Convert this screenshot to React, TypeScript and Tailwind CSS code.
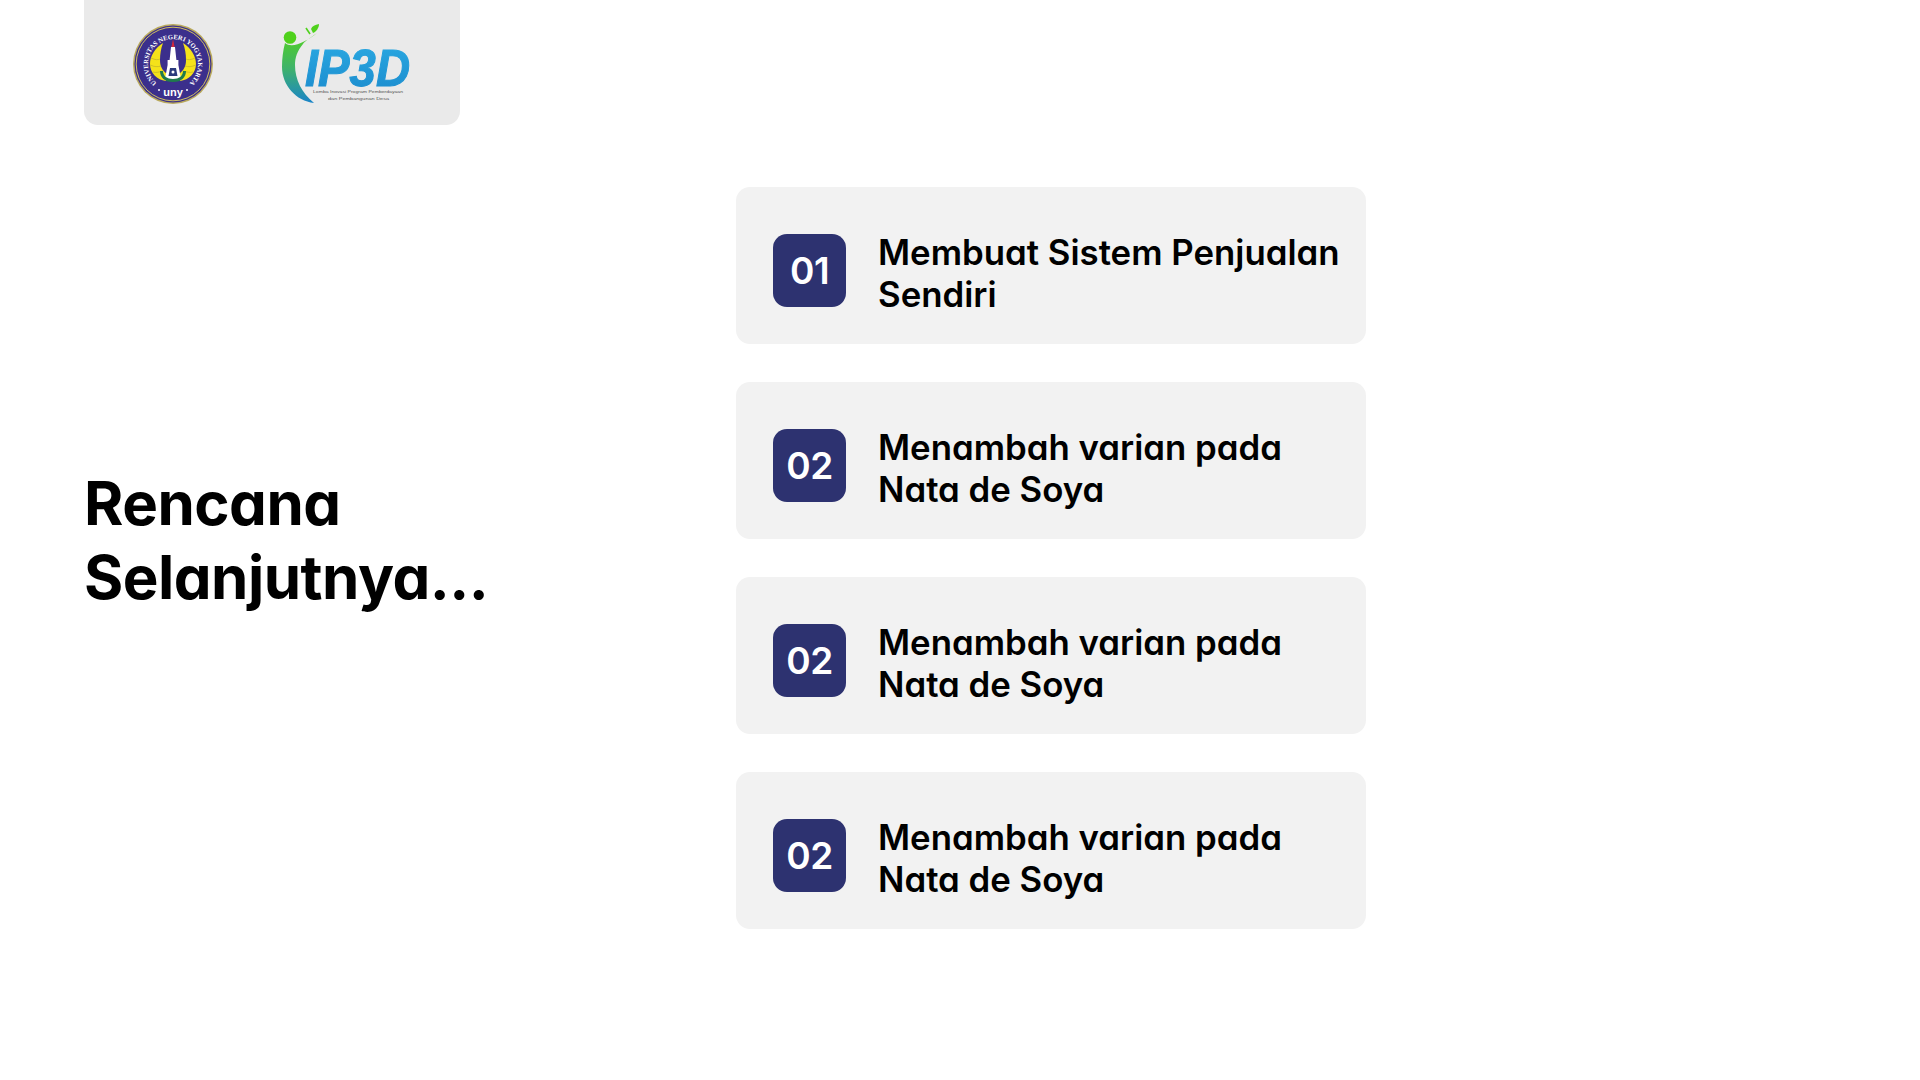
const items = [
  { no: '01', text: 'Membuat Sistem Penjualan Sendiri' },
  { no: '02', text: 'Menambah varian pada Nata de Soya' },
  { no: '02', text: 'Menambah varian pada Nata de Soya' },
  { no: '02', text: 'Menambah varian pada Nata de Soya' },
]

function UnyLogo() {
  return (
    <svg width="80" height="80" viewBox="0 0 80 80" className="shrink-0">
      <defs>
        <path id="uny-ring" d="M 25.6 60.5 A 25 25 0 1 1 54.4 60.5" />
      </defs>
      <circle cx="40" cy="40" r="40" fill="#b9a95c" />
      <circle cx="40" cy="40" r="38.5" fill="#3b2f8c" />
      <circle cx="40" cy="40" r="36.8" fill="none" stroke="#e0cf5e" strokeWidth="0.9" />
      <text fill="#ffffff" fontFamily="'Liberation Serif', serif" fontSize="6.6" fontWeight="700" textAnchor="middle">
        <textPath href="#uny-ring" startOffset="50%">UNIVERSITAS NEGERI YOGYAKARTA</textPath>
      </text>
      {/* wings */}
      <path d="M30 19 C22 24 17 32 17 40 C17 49 24 56 33 57 L34 50 C29 46 27 42 27 36 C27 30 28 24 30 19 Z" fill="#f5e21a" />
      <path d="M50 19 C58 24 63 32 63 40 C63 49 56 56 47 57 L46 50 C51 46 53 42 53 36 C53 30 52 24 50 19 Z" fill="#f5e21a" />
      <path d="M18 34 C22 36 25 36 27 35 M17.5 41 C21 43 25 43 28 42 M20 48 C23 49 26 48 30 47" stroke="#b8a82a" strokeWidth="0.6" fill="none" />
      <path d="M62 34 C58 36 55 36 53 35 M62.5 41 C59 43 55 43 52 42 M60 48 C57 49 54 48 50 47" stroke="#b8a82a" strokeWidth="0.6" fill="none" />
      {/* tugu */}
      <path d="M40 15 L41.6 23 H38.4 Z" fill="#d2283c" />
      <path d="M38 23 H42 L43.4 36 H45.4 V41 L48 55 H32 L34.6 41 V36 H36.6 Z" fill="#ffffff" />
      <path d="M27 47 C27 53 31 58 40 58 C49 58 53 53 53 47 L50 47 C50 52 46 55 40 55 C34 55 30 52 30 47 Z" fill="#1f7a4d" />
      <path d="M37 44 H43 L44.5 52 H35.5 Z" fill="#2b3a7c" />
      <circle cx="40" cy="48" r="1.5" fill="#ffffff" />
      <text x="40" y="72" textAnchor="middle" fill="#ffffff" fontFamily="'Liberation Sans', sans-serif" fontSize="11" fontWeight="700">uny</text>
      <circle cx="26" cy="66" r="1" fill="#ffffff" />
      <circle cx="54" cy="66" r="1" fill="#ffffff" />
    </svg>
  )
}

function Ip3dLogo() {
  return (
    <svg width="128" height="78" viewBox="0 0 128 78" className="shrink-0 overflow-visible">
      <defs>
        <linearGradient id="ip-body" x1="0" y1="0" x2="0" y2="1">
          <stop offset="0" stopColor="#52d11f" />
          <stop offset="0.5" stopColor="#3fb36a" />
          <stop offset="1" stopColor="#1a84c9" />
        </linearGradient>
        <linearGradient id="ip-text" x1="0" y1="0" x2="0" y2="1">
          <stop offset="0" stopColor="#2aa9e2" />
          <stop offset="1" stopColor="#1b8bcd" />
        </linearGradient>
      </defs>
      <circle cx="8" cy="12.5" r="6.3" fill="#4fd11c" />
      <path d="M35 8 C28 13 23 16 21 19 C15 26 13 33 13 40 C13 55 20 68 32 78 C14 76 0 60 0 42 C0 33 1 26 3 18 C10 24 24 17 35 8 Z" fill="url(#ip-body)" />
      {/* leaf and check */}
      <path d="M29 4 C30 1 33 0 37 -1 C37 3 34 7 31 8 Z" fill="#4fd11c" />
      <path d="M24 3 L28 9" stroke="#4fd11c" strokeWidth="1.6" fill="none" />
      <text x="23" y="61" textLength="105" lengthAdjust="spacingAndGlyphs" fill="url(#ip-text)" stroke="url(#ip-text)" strokeWidth="1.1" fontFamily="'Liberation Sans', sans-serif" fontSize="51" fontStyle="italic" fontWeight="700">IP3D</text>
      <text x="31" y="67.5" textLength="90" lengthAdjust="spacingAndGlyphs" fill="#555555" fontFamily="'Liberation Sans', sans-serif" fontSize="4.4">Lomba Inovasi Program Pemberdayaan</text>
      <text x="46" y="74.5" textLength="61" lengthAdjust="spacingAndGlyphs" fill="#555555" fontFamily="'Liberation Sans', sans-serif" fontSize="4.4">dan Pembangunan Desa</text>
    </svg>
  )
}

export default function App() {
  return (
    <div className="flex h-[1080px] w-[1920px] overflow-hidden bg-white font-['Inter',sans-serif] text-black [font-feature-settings:'cv11','ss03']">
      {/* Left */}
      <div className="flex w-[736px] shrink-0 flex-col pl-[84px]">
        <div className="flex h-[125px] w-[376px] items-center gap-[69px] rounded-b-[14px] bg-[#eaeaea] pt-[2px] pl-[49px]">
          <UnyLogo />
          <Ip3dLogo />
        </div>
        <h1 className="mt-[341px] text-[60px] leading-[74px] font-bold tracking-[-0.5px]">
          Rencana
          <br />
          Selanjutnya...
        </h1>
      </div>

      {/* Cards */}
      <div className="flex flex-col gap-[38px] pt-[187px]">
        {items.map((item, i) => (
          <div key={i} className="flex h-[157px] w-[630px] items-start gap-[32px] rounded-[14px] bg-[#f2f2f2] pt-[45px] pl-[37px]">
            <div className="mt-[2px] flex h-[73px] w-[73px] shrink-0 items-center justify-center rounded-[14px] bg-[#2d3270] text-[37px] font-semibold tracking-[-0.5px] text-white">
              {item.no}
            </div>
            <p className="w-[470px] text-[34.8px] leading-[41.6px] font-semibold">{item.text}</p>
          </div>
        ))}
      </div>
    </div>
  )
}
